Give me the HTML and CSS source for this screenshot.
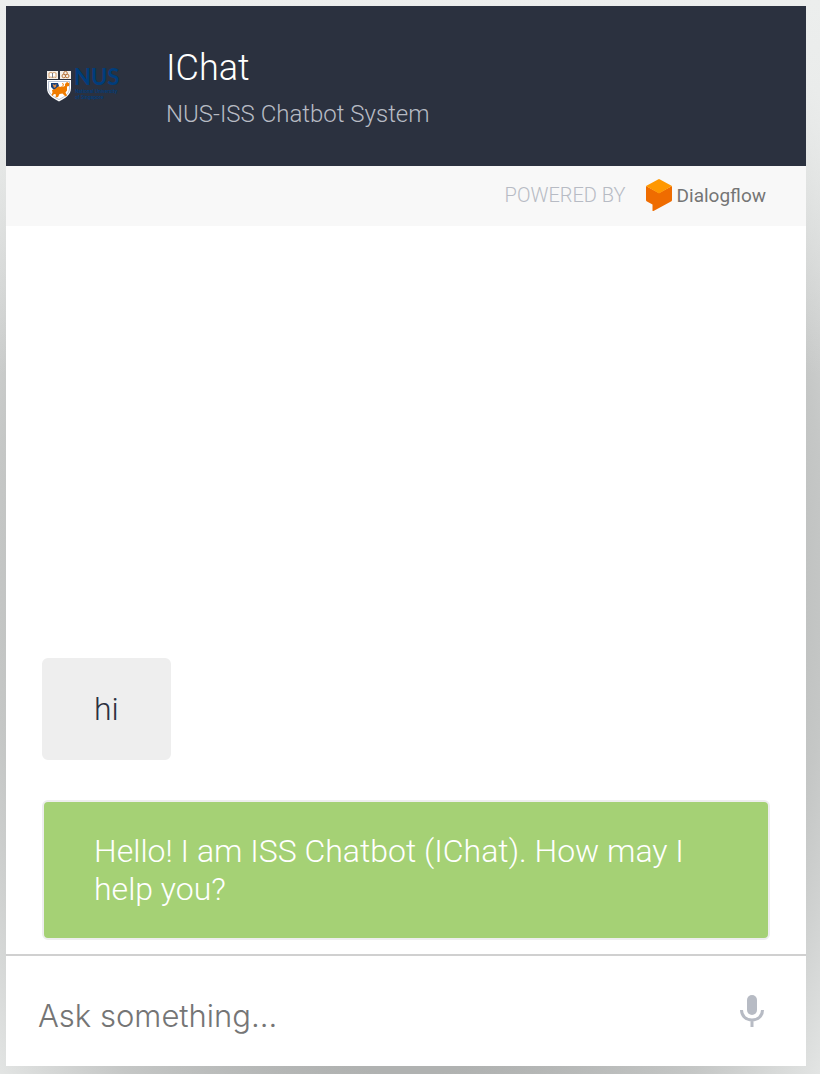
FILE: index.html
```html
<!DOCTYPE html>
<html lang="en">
<head>
<meta charset="utf-8">
<meta name="viewport" content="width=device-width, initial-scale=1">
<title>IChat</title>
<link rel="stylesheet" href="styles.css">
</head>
<body>
<main class="chat">
  <header class="header">
    <svg class="crest" viewBox="0 -4 80 44" role="img" aria-label="NUS National University of Singapore">
      <path d="M1 3h11v8H1zM14 3h11v8H14z" fill="#f4efe9"/>
      <path d="M3 5q2-1 3.500 0Q8 4 10 5v4.500q-2-1-3.500 0-1.500-1-3.500 0z" fill="#fff" stroke="#c98a4b" stroke-width=".8"/>
      <path d="M6.500 5v4.500" stroke="#5a5f70" stroke-width=".8"/>
      <g fill="none" stroke="#b8743a"><circle cx="19.500" cy="5.200" r="1.800"/><circle cx="17.800" cy="8" r="1.800"/><circle cx="21.200" cy="8" r="1.800"/></g>
      <path d="M1 12h24V20c0 7-6 10.500-12 13.500C7 30.500 1 27 1 20z" fill="#fff"/>
      <path d="M2.500 13.500h21V20c0 5.500-4.500 8.500-10.500 11.500C7 28.500 2.500 25.500 2.500 20z" fill="#fff" stroke="#8d9db8" stroke-width=".6"/>
      <path d="M5 15h7l1 3-2 3-3 1-3-3z" fill="#17427c"/>
      <path d="M6.500 16l2 1 2-1-.5 3-2 1z" fill="#d98a48"/>
      <path d="M6 22l3-1 3-2.500 4 .5 3-1v-2l2-2 2.500 1.500-.5 2.500-2 .5v4l-1.500 2 1.500 3-1.500 1-3-3-3 .5-1.500 3-2.500.5.500-3-2-.5-1.500 2-1-1 1-2.500z" fill="#ef7c00"/>
      <path d="M15.500 19l2-2-1-2" fill="none" stroke="#ef7c00"/>
      <text class="crest-name" x="28" y="17">NUS</text>
      <text class="crest-line" x="29" y="25">National University</text>
      <text class="crest-line" x="29" y="31">of Singapore</text>
    </svg>
    <div class="heading">
      <h1 class="title">IChat</h1>
      <p class="subtitle">NUS-ISS Chatbot System</p>
    </div>
  </header>
  <div class="powered">
    <span>POWERED BY</span>
    <a class="brand" href="#" aria-label="Dialogflow">
      <svg class="brand-icon" viewBox="0 0 26 32" aria-hidden="true">
        <path d="M0 7l13 7 13-7v14q0 1-1 1.500L7.500 32q-1 .5-1-.5v-6l-5.500-3q-1-.5-1-1.500z" fill="#ef6c00"/>
        <path d="M0 7L12 .4q1-.6 2 0L26 7l-13 7.500z" fill="#ff9800"/>
      </svg>
      <span class="brand-name">Dialogflow</span>
    </a>
  </div>
  <section class="messages" aria-label="Conversation">
    <p class="bubble">hi</p>
    <p class="bubble bubble-reply">Hello! I am ISS Chatbot (IChat). How may I help you?</p>
  </section>
  <form class="composer">
    <input class="query" type="text" placeholder="Ask something..." aria-label="Ask something">
    <button class="mic" type="button" aria-label="Speak">
      <svg class="mic-icon" viewBox="0 0 24 32" aria-hidden="true">
        <rect x="7" y="0" width="10" height="20" rx="5" fill="#b7bbc4"/>
        <path d="M1.500 15c0 6 4.500 10 10.500 10s10.500-4 10.500-10M12 25v7" fill="none" stroke="#b7bbc4" stroke-width="3"/>
      </svg>
    </button>
  </form>
</main>
</body>
</html>
```

FILE: styles.css
```css
* { box-sizing: border-box; }
body {
  margin: 0;
  min-height: 100vh;
  padding: 6px 14px 8px 6px;
  display: flex;
  font-family: Roboto, "Liberation Sans", sans-serif;
  font-weight: 300;
  background:
    linear-gradient(to bottom, #eceeed 0%, rgba(236, 238, 237, 0) 35%),
    radial-gradient(75% 90% at 50% 55%, #b0b2b1 50%, #c5c7c6 68%, #e4e6e5 84%);
}
h1, p { margin: 0; font-weight: 300; }
.chat { flex: 1; display: flex; flex-direction: column; min-width: 0; background: #fff; }
.header {
  display: flex;
  align-items: center;
  gap: 40px;
  min-height: 160px;
  padding: 0 40px;
  background: #2b313f;
}
.crest { width: 80px; height: 44px; flex: none; }
.crest-name { font: 700 22px Lato, sans-serif; fill: #003d7c; }
.crest-line { font: 500 5px Roboto, sans-serif; fill: #003d7c; }
.title { padding-top: 2px; font-size: 36px; line-height: 44px; color: #fff; }
.subtitle { margin-top: 10px; font-size: 24px; line-height: 28px; color: #b7bbc4; }
.powered {
  display: flex;
  align-items: center;
  justify-content: flex-end;
  gap: 20px;
  min-height: 60px;
  padding: 0 40px 2px;
  background: #f8f8f8;
  color: #b7bbc4;
  font-size: 20px;
}
.brand { display: flex; align-items: center; gap: 5px; color: #757575; text-decoration: none; }
.brand-icon { width: 26px; height: 32px; }
.brand-name { font: 400 19px Roboto, sans-serif; }
.messages {
  flex: 1;
  display: flex;
  flex-direction: column;
  justify-content: flex-end;
  align-items: flex-start;
  gap: 40px;
  padding: 0 36px 14px;
}
.bubble {
  padding: 30px 50px;
  border: 2px solid #eee;
  border-radius: 6px;
  background: #eee;
  color: #2b313f;
  font-size: 32px;
  line-height: 38px;
}
.bubble-reply { background: #a5d175; color: #fff; }
.composer {
  display: flex;
  align-items: center;
  min-height: 112px;
  padding: 0 40px 0 32px;
  border-top: 2px solid #d0d0d0;
}
.query {
  flex: 1;
  min-width: 0;
  padding: 16px 0 8px;
  border: 0;
  outline: 0;
  background: none;
  font: 300 31px Inter, sans-serif;
  color: #2b313f;
}
.query::placeholder { color: #757575; opacity: 1; }
.mic { padding: 0; border: 0; background: none; display: flex; }
.mic-icon { width: 28px; height: 32px; }
```
